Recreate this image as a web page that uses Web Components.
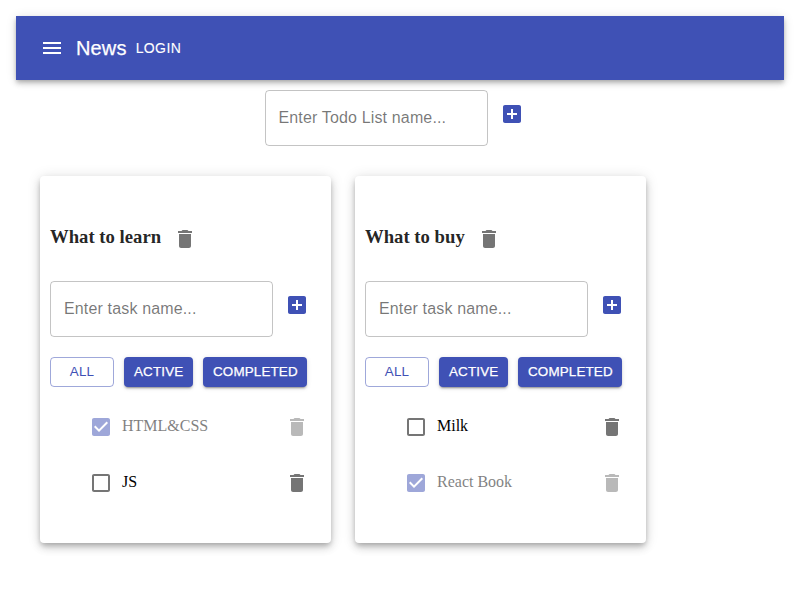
<!DOCTYPE html>
<html lang="en"><head><meta charset="utf-8"><title>Todo lists</title>
<style>
body{box-sizing:border-box;min-height:100vh;margin:0;padding:16px 16px 0;background:#fff;font-family:"Liberation Serif",serif;font-size:16px;color:rgba(0,0,0,.87)}
.new-list{display:flex;justify-content:center;margin-top:10px}
.lists{display:flex;gap:24px;margin:30px 0 0 24px}
</style></head><body>
<app-header title-text="News"><app-button variant="text">Login</app-button></app-header>
<div class="new-list"><add-item label="Enter Todo List name..."></add-item></div>
<div class="lists">
<todo-list heading="What to learn"><task-item done>HTML&amp;CSS</task-item><task-item>JS</task-item></todo-list>
<todo-list heading="What to buy"><task-item>Milk</task-item><task-item done>React Book</task-item></todo-list>
</div>
<script>
const ICONS={
menu:'M3 18h18v-2H3v2zm0-5h18v-2H3v2zm0-7v2h18V6H3z',
trash:'M6 19c0 1.1.9 2 2 2h8c1.1 0 2-.9 2-2V7H6v12zM19 4h-3.5l-1-1h-5l-1 1H5v2h14V4z',
add:'M19 3H5c-1.11 0-2 .9-2 2v14c0 1.1.89 2 2 2h14c1.1 0 2-.9 2-2V5c0-1.1-.9-2-2-2zm-2 10h-4v4h-2v-4H7v-2h4V7h2v4h4v2z',
unchecked:'M19 5v14H5V5h14m0-2H5c-1.1 0-2 .9-2 2v14c0 1.1.9 2 2 2h14c1.1 0 2-.9 2-2V5c0-1.1-.9-2-2-2z',
checked:'M19 3H5c-1.11 0-2 .9-2 2v14c0 1.1.89 2 2 2h14c1.11 0 2-.9 2-2V5c0-1.1-.89-2-2-2zm-9 14l-5-5 1.41-1.41L10 14.17l7.59-7.59L19 8l-9 9z'};
class Base extends HTMLElement{connectedCallback(){if(!this.shadowRoot)this.attachShadow({mode:'open'}).innerHTML=this.render()}}
customElements.define('app-icon',class extends Base{render(){return `<style>:host{display:block;width:24px;height:24px;flex:none}svg{display:block}</style><svg width="24" height="24" viewBox="0 0 24 24" fill="currentColor"><path d="${ICONS[this.getAttribute('name')]}"/></svg>`}});
customElements.define('app-button',class extends Base{render(){return `<style>:host{display:block;flex:none}button{display:block;box-sizing:border-box;width:100%;height:30px;margin:0;border:0;border-radius:4px;padding:0 10px 1px;font:500 13.4px/29px "Liberation Sans",sans-serif;letter-spacing:.16px;-webkit-text-stroke:.25px currentColor;text-transform:uppercase;color:#fff;background:#3f51b5;box-shadow:0 3px 1px -2px rgba(0,0,0,.2),0 2px 2px rgba(0,0,0,.14),0 1px 5px rgba(0,0,0,.12);white-space:nowrap}
:host([variant=outlined]) button{color:#3f51b5;background:none;border:1px solid rgba(63,81,181,.5);box-shadow:none;padding:0 9px 1px;line-height:27px;-webkit-text-stroke:0}
:host([variant=text]) button{font-size:14px;letter-spacing:.4px;padding:0 9px;line-height:30px;-webkit-text-stroke:.1px currentColor;background:none;box-shadow:none}</style><button><slot></slot></button>`}});
customElements.define('app-header',class extends Base{render(){return `<style>:host{display:flex;align-items:center;box-sizing:border-box;height:64px;padding:0 24px;background:#3f51b5;color:#fff;box-shadow:0 2px 4px -1px rgba(0,0,0,.2),0 4px 5px rgba(0,0,0,.14),0 1px 10px rgba(0,0,0,.12)}h6{margin:0 0 0 12px;font:500 20px/32px "Liberation Sans",sans-serif;letter-spacing:.15px;-webkit-text-stroke:.25px currentColor}</style><app-icon name="menu"></app-icon><h6>${this.getAttribute('title-text')}</h6><slot></slot>`}});
customElements.define('add-item',class extends Base{render(){return `<style>:host{display:flex;align-items:flex-start}input{box-sizing:border-box;width:223px;height:56px;margin:0;border:1px solid rgba(0,0,0,.23);border-radius:4px;padding:0 13px;background:none;font:16px "Liberation Sans",sans-serif;letter-spacing:.15px}input::placeholder{color:rgba(0,0,0,.54);opacity:1}app-icon{margin:12px;color:#3f51b5}</style><input placeholder="${this.getAttribute('label')}"><app-icon name="add"></app-icon>`}});
customElements.define('task-item',class extends Base{render(){const d=this.hasAttribute('done');return `<style>:host{display:flex;align-items:center;height:56px;color:#000}:host([done]){opacity:.5}.box{margin-right:9px;color:${d?'#3f51b5':'rgba(0,0,0,.54)'}}.trash{margin-left:auto;color:rgba(0,0,0,.54)}span{padding-bottom:2px}</style><app-icon class="box" name="${d?'checked':'unchecked'}"></app-icon><span><slot></slot></span><app-icon class="trash" name="trash"></app-icon>`}});
customElements.define('todo-list',class extends Base{render(){return `<style>:host{display:block;box-sizing:border-box;width:291px;height:367px;padding:51px 10px 0;border-radius:4px;background:#fff;box-shadow:0 3px 5px -1px rgba(0,0,0,.2),0 5px 8px rgba(0,0,0,.14),0 1px 14px rgba(0,0,0,.12)}.head{display:flex;align-items:center;height:24px;margin-bottom:30px}h3{margin:0 12px 5px 0;font-size:18.72px;line-height:21px}.head app-icon{color:rgba(0,0,0,.54)}.filters{display:flex;gap:10px;margin-top:20px}.tasks{padding:12px 12px 0 39px}</style><div class="head"><h3>${this.getAttribute('heading')}</h3><app-icon name="trash"></app-icon></div><add-item label="Enter task name..."></add-item><div class="filters"><app-button variant="outlined" style="width:64px">All</app-button><app-button style="width:69px">Active</app-button><app-button style="width:104px">Completed</app-button></div><div class="tasks"><slot></slot></div>`}});
</script></body></html>
